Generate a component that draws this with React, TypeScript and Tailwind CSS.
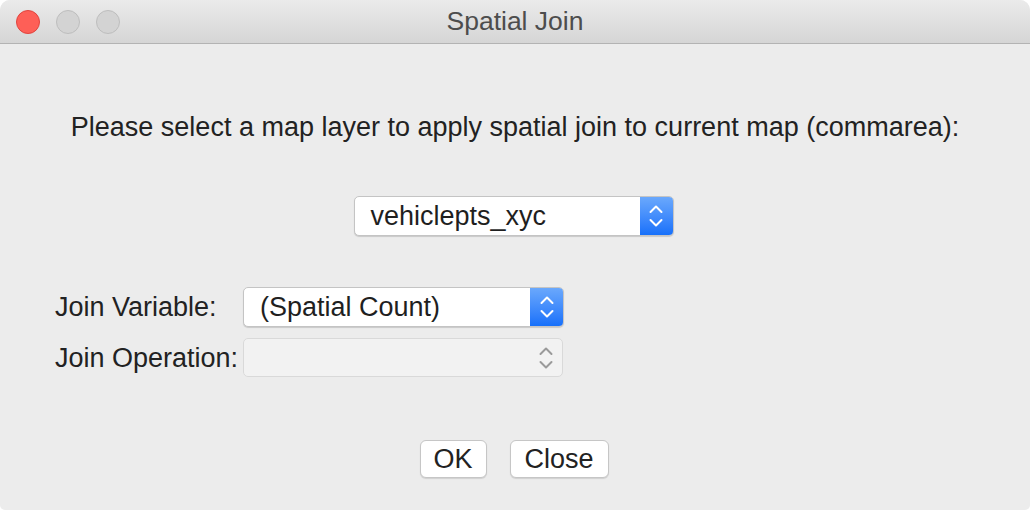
const font = { fontFamily: '"Liberation Sans", Arial, sans-serif' };

const Chevrons = ({ color }: { color: string }) => (
  <svg width="14" height="26" viewBox="0 0 14 26" fill="none" stroke={color} strokeWidth="2" strokeLinecap="round" strokeLinejoin="round">
    <path d="M1.5 9 L7 3.5 L12.5 9" />
    <path d="M1.5 17 L7 22.5 L12.5 17" />
  </svg>
);

const PopUp = ({ label, width, disabled }: { label?: string; width: string; disabled?: boolean }) => {
  if (disabled) {
    return (
      <div className={`${width} h-[39px] flex rounded-[5px] border border-[#d9d9d9] bg-[#f2f2f2]`}>
        <div className="flex-1" />
        <div className="w-[33px] flex items-center justify-center">
          <Chevrons color="#9a9a9a" />
        </div>
      </div>
    );
  }
  return (
    <div className={`${width} h-[40px] flex rounded-[5px] border border-[#c4c4c4] bg-white shadow-[0_1px_1px_rgba(0,0,0,0.15)] overflow-hidden`}>
      <div className="flex-1 flex items-center pl-[16px] text-[27px] text-[#1f1f1f]">{label}</div>
      <div className="w-[33px] flex items-center justify-center bg-gradient-to-b from-[#6aa8fc] to-[#1670fa]">
        <Chevrons color="#ffffff" />
      </div>
    </div>
  );
};

export default function App() {
  return (
    <div className="w-[1030px] h-[510px] bg-white" style={font}>
      <div className="w-full h-full flex flex-col rounded-t-[10px] rounded-b-[5px] overflow-hidden bg-[#ececec]">
        <div className="relative h-[44px] shrink-0 flex items-center justify-center bg-gradient-to-b from-[#ebebeb] to-[#d5d5d5] border-b border-[#b3b3b3]">
          <div className="absolute left-[16px] top-[10px] flex gap-[16px]">
            <span className="w-[24px] h-[24px] rounded-full bg-[#fe5f57] border border-[#e0443e]" />
            <span className="w-[24px] h-[24px] rounded-full bg-[#d3d3d3] border border-[#bdbdbd]" />
            <span className="w-[24px] h-[24px] rounded-full bg-[#d3d3d3] border border-[#bdbdbd]" />
          </div>
          <span className="text-[26.5px] text-[#4d4d4d]">Spatial Join</span>
        </div>

        <div className="flex flex-col">
          <p className="mt-[68px] h-[30px] leading-[30px] text-center text-[27px] text-[#222]">
            Please select a map layer to apply spatial join to current map (commarea):
          </p>

          <div className="mt-[54px] flex justify-center pr-[3px]">
            <PopUp label="vehiclepts_xyc" width="w-[320px]" />
          </div>

          <div className="mt-[51px] flex items-center pl-[55px]">
            <span className="w-[188px] text-[27px] text-[#222]">Join Variable:</span>
            <PopUp label="(Spatial Count)" width="w-[321px]" />
          </div>

          <div className="mt-[10px] flex items-center pl-[55px]">
            <span className="w-[188px] text-[27px] text-[#222]">Join Operation:</span>
            <PopUp width="w-[320px]" disabled />
          </div>

          <div className="mt-[62px] flex justify-center gap-[23px] pr-[2px]">
            <button className="w-[67px] h-[38px] rounded-[6px] bg-white border border-[#c6c6c6] shadow-[0_1px_1px_rgba(0,0,0,0.12)] text-[27px] leading-[34px] text-[#222]">
              OK
            </button>
            <button className="w-[99px] h-[38px] rounded-[6px] bg-white border border-[#c6c6c6] shadow-[0_1px_1px_rgba(0,0,0,0.12)] text-[27px] leading-[34px] text-[#222]">
              Close
            </button>
          </div>
        </div>
      </div>
    </div>
  );
}
